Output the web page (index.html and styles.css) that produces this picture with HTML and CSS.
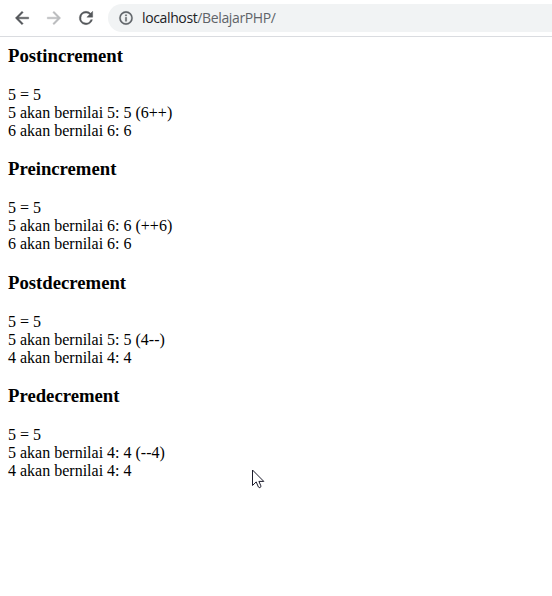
FILE: index.html
```html
<!DOCTYPE html>
<html lang="id">
<head>
<meta charset="utf-8">
<title>localhost/BelajarPHP/</title>
<link rel="stylesheet" href="styles.css">
</head>
<body>
<header class="toolbar">
  <svg class="icon" viewBox="0 0 24 24"><path d="M20 11H7.83l5.59-5.59L12 4l-8 8 8 8 1.41-1.41L7.83 13H20v-2z"/></svg>
  <svg class="icon disabled" viewBox="0 0 24 24"><path d="M12 4l-1.41 1.41L16.17 11H4v2h12.17l-5.58 5.59L12 20l8-8z"/></svg>
  <svg class="icon" viewBox="0 0 24 24"><path d="M17.65 6.35A7.96 7.96 0 0 0 12 4a8 8 0 1 0 7.73 10h-2.08A6 6 0 1 1 12 6c1.66 0 3.14.69 4.22 1.78L13 11h7V4l-2.35 2.35z"/></svg>
  <div class="address">
    <svg class="info" viewBox="0 0 24 24"><path d="M11 17h2v-6h-2v6zm1-15a10 10 0 1 0 0 20 10 10 0 0 0 0-20zm0 18a8 8 0 1 1 0-16 8 8 0 0 1 0 16zM11 9h2V7h-2v2z"/></svg>
    <span class="url">localhost<span class="path">/BelajarPHP/</span></span>
  </div>
</header>
<main class="page">
  <h3>Postincrement</h3>
  <p>5 = 5<br>5 akan bernilai 5: 5 (6++)<br>6 akan bernilai 6: 6</p>
  <h3>Preincrement</h3>
  <p>5 = 5<br>5 akan bernilai 6: 6 (++6)<br>6 akan bernilai 6: 6</p>
  <h3>Postdecrement</h3>
  <p>5 = 5<br>5 akan bernilai 5: 5 (4--)<br>4 akan bernilai 4: 4</p>
  <h3>Predecrement</h3>
  <p>5 = 5<br>5 akan bernilai 4: 4 (--4)<br>4 akan bernilai 4: 4</p>
</main>
<svg class="cursor" viewBox="0 0 13 20"><path d="M.5 1v15.5l3.7-3.6 2.2 5.1q.6 1 1.7.5t.8-1.6l-2-4.5h4.9z"/></svg>
</body>
</html>
```

FILE: styles.css
```css
body {
  margin: 0;
  background: #fff;
  color: #000;
  overflow: hidden;
}
.toolbar {
  box-sizing: border-box;
  display: flex;
  align-items: center;
  gap: 12px;
  height: 37px;
  padding-left: 12px;
  border-bottom: 1px solid #dadce0;
}
.icon {
  flex: none;
  width: 20px;
  height: 20px;
  fill: #54575b;
  stroke: #54575b;
  stroke-width: 0.5;
}
.disabled {
  fill: #babcbe;
  stroke: #babcbe;
}
.address {
  display: flex;
  flex: 1;
  align-items: center;
  gap: 8px;
  height: 28px;
  padding-left: 10px;
  border-radius: 14px 0 0 14px;
  background: #f1f3f4;
}
.info {
  width: 16px;
  height: 16px;
  fill: #5f6368;
  stroke: #5f6368;
  stroke-width: 0.5;
}
.url {
  font: 14px/20px "Open Sans", sans-serif;
  letter-spacing: -0.37px;
  color: #202124;
}
.path {
  color: #5f6368;
}
.page {
  padding: 8px;
  font: 16px/18px "Liberation Serif", serif;
}
h3 {
  margin: 0 0 18.72px;
  font-size: 18.72px;
  line-height: 22px;
}
p {
  margin: 0 0 18.72px;
}
.cursor {
  position: absolute;
  left: 252px;
  top: 469px;
  width: 13px;
  height: 20px;
  fill: #fff;
  stroke: #1b1b2b;
}
```
